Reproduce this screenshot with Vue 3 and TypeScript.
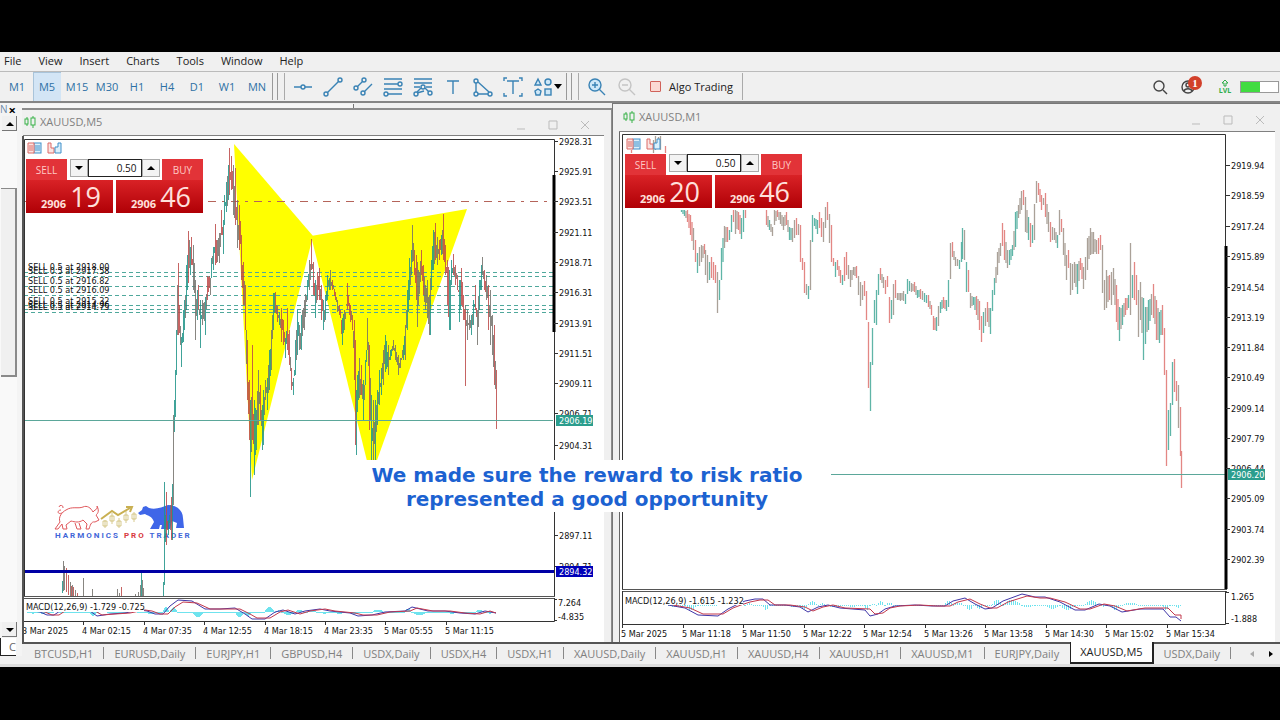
<script setup lang="ts">
import { ref } from 'vue'

type Key = [number, number, number]
interface Bar { x: number; y1: number; y2: number; tone: string }

const menus = ['File', 'View', 'Insert', 'Charts', 'Tools', 'Window', 'Help']
const frames = ['M1', 'M5', 'M15', 'M30', 'H1', 'H4', 'D1', 'W1', 'MN']
const frame = ref('M5')
const tabs = [
  'BTCUSD,H1', 'EURUSD,Daily', 'EURJPY,H1', 'GBPUSD,H4', 'USDX,Daily', 'USDX,H4', 'USDX,H1',
  'XAUUSD,Daily', 'XAUUSD,H1', 'XAUUSD,H4', 'XAUUSD,H1', 'XAUUSD,M1', 'EURJPY,Daily', 'XAUUSD,M5', 'USDX,Daily',
]
const activeTab = ref(13)
const lotsM5 = ref('0.50')
const lotsM1 = ref('0.50')

const noise = (n: number): number => {
  const v = Math.sin(n * 127.1 + 11.7) * 43758.5453
  return v - Math.floor(v)
}

/* Fills the gaps between key bars and picks a tone from the local direction. */
function makeBars(keys: Key[], step: number, maxGap: number, jitter: number): Bar[] {
  const out: Bar[] = []
  for (let i = 0; i < keys.length; i++) {
    const [x, a, b] = keys[i]
    const next = keys[i + 1]
    const dir = next ? next[1] + next[2] - a - b : 20
    const r = noise(x)
    const tone = Math.abs(dir) < 14 ? (r < 0.5 ? 'mix' : r < 0.75 ? 'up' : 'down') : dir < 0 ? (r < 0.8 ? 'up' : 'mix') : r < 0.8 ? 'down' : 'mix'
    out.push({ x, y1: a, y2: b, tone })
    if (!next || next[0] - x > maxGap) continue
    const n = Math.round((next[0] - x) / step)
    for (let k = 1; k < n; k++) {
      const t = k / n
      const top = a + (next[1] - a) * t
      const bottom = b + (next[2] - b) * t
      const size = bottom - top
      out.push({
        x: x + (next[0] - x) * t,
        y1: Math.round(top + size * jitter * noise(x + k)),
        y2: Math.round(bottom - size * jitter * noise(x * 3 + k)),
        tone: noise(x + k * 7) < 0.5 ? 'mix' : tone,
      })
    }
  }
  return out
}

const m5Keys: Key[] = [
  [163, 582, 596], [164, 482, 585], [166, 492, 545], [168, 520, 535], [170, 505, 530], [171, 497, 540], [172, 484, 540], [173, 415, 505], [174, 400, 432],
  [175, 370, 417], [176, 330, 375], [177, 285, 335], [178, 263, 335], [180, 326, 345], [181, 337, 367], [183, 310, 342], [184, 300, 330],
  [186, 265, 310], [187, 255, 290], [188, 231, 283], [190, 247, 275], [191, 237, 265], [193, 245, 290], [195, 280, 340], [197, 290, 320], [198, 285, 310],
  [200, 300, 348], [202, 300, 325], [205, 297, 335], [207, 276, 300], [209, 276, 288], [210, 278, 295], [211, 258, 278], [213, 247, 270], [215, 224, 265],
  [217, 240, 262], [219, 233, 263], [221, 210, 235], [223, 220, 254], [224, 195, 225], [226, 182, 212], [228, 165, 200], [229, 148, 195], [231, 156, 190],
  [233, 165, 215], [235, 168, 225], [237, 200, 248], [239, 205, 250], [241, 235, 280], [243, 262, 305], [245, 285, 330], [247, 340, 400],
  [249, 380, 440], [250, 400, 497], [252, 345, 440], [254, 400, 475], [256, 410, 450], [258, 370, 425], [260, 385, 420], [262, 405, 450],
  [263, 390, 445], [265, 380, 400], [267, 378, 410], [269, 350, 390], [271, 330, 370], [273, 293, 330], [275, 292, 313], [277, 306, 322],
  [279, 312, 325], [281, 308, 342], [283, 320, 345], [285, 338, 358], [287, 308, 350], [289, 330, 365], [291, 368, 390], [293, 378, 395],
  [295, 340, 375], [297, 310, 355], [299, 325, 350], [301, 315, 350], [304, 300, 330], [307, 280, 300], [309, 260, 290], [311, 239, 270],
  [313, 262, 295], [315, 280, 318], [317, 272, 300], [319, 268, 300], [321, 285, 320], [323, 300, 330], [325, 295, 320], [327, 275, 300],
  [330, 270, 290], [332, 280, 290], [335, 292, 300], [337, 300, 312], [339, 305, 315], [342, 318, 345], [344, 310, 330], [347, 283, 310],
  [350, 305, 322], [352, 315, 330], [354, 320, 380], [355, 340, 445], [356, 390, 455], [357, 375, 412], [359, 358, 398], [361, 365, 395],
  [363, 380, 420], [365, 360, 385], [367, 318, 350], [369, 345, 430], [371, 395, 460], [373, 400, 460], [375, 400, 460], [377, 390, 425],
  [379, 370, 405], [381, 368, 395], [383, 350, 385], [385, 335, 372], [388, 345, 375], [390, 350, 360], [393, 340, 350], [395, 345, 360],
  [398, 355, 375], [400, 358, 368], [403, 345, 360], [405, 325, 360], [407, 290, 330], [409, 258, 300], [411, 250, 275], [412, 225, 262],
  [414, 250, 275], [416, 255, 300], [418, 270, 305], [421, 250, 275], [423, 265, 295], [425, 285, 310], [427, 280, 318], [429, 295, 335],
  [431, 260, 290], [433, 230, 270], [435, 223, 260], [437, 237, 265], [439, 240, 260], [441, 235, 255], [443, 214, 260], [445, 245, 275],
  [447, 260, 305], [449, 270, 330], [451, 260, 285], [453, 254, 275], [455, 265, 285], [457, 275, 290], [459, 280, 322], [461, 268, 305],
  [463, 295, 320], [465, 305, 340], [467, 310, 340], [469, 315, 330], [471, 315, 335], [473, 300, 325], [475, 285, 310], [477, 310, 345],
  [479, 280, 310], [481, 265, 290], [482, 257, 275], [484, 270, 290], [486, 275, 300], [488, 285, 330], [490, 290, 345], [492, 315, 355],
  [494, 325, 385], [496, 370, 420],
]
const m5Extra: Bar[] = [
  { x: 62, y1: 581, y2: 593, tone: 'up' }, { x: 63, y1: 561, y2: 591, tone: 'mix' }, { x: 64, y1: 566, y2: 590, tone: 'mix' }, { x: 66, y1: 568, y2: 592, tone: 'down' },
  { x: 68, y1: 575, y2: 595, tone: 'down' }, { x: 70, y1: 582, y2: 596, tone: 'mix' }, { x: 71, y1: 586, y2: 596, tone: 'down' },
  { x: 72, y1: 585, y2: 596, tone: 'mix' }, { x: 73, y1: 587, y2: 596, tone: 'down' }, { x: 75, y1: 590, y2: 596, tone: 'mix' }, { x: 77, y1: 593, y2: 596, tone: 'down' },
  { x: 83, y1: 578, y2: 596, tone: 'mix' }, { x: 92, y1: 589, y2: 596, tone: 'mix' }, { x: 117, y1: 589, y2: 596, tone: 'mix' },
  { x: 119, y1: 593, y2: 596, tone: 'mix' }, { x: 121, y1: 587, y2: 596, tone: 'down' }, { x: 135, y1: 594, y2: 596, tone: 'mix' },
  { x: 138, y1: 592, y2: 596, tone: 'mix' }, { x: 140, y1: 585, y2: 596, tone: 'mix' }, { x: 141, y1: 572, y2: 596, tone: 'up' },
  { x: 142, y1: 580, y2: 596, tone: 'mix' }, { x: 143, y1: 588, y2: 596, tone: 'mix' }, { x: 465, y1: 310, y2: 386, tone: 'down' }, { x: 496, y1: 370, y2: 429, tone: 'down' },
  { x: 430, y1: 300, y2: 335, tone: 'up' }, { x: 417, y1: 262, y2: 327, tone: 'mix' }, { x: 450, y1: 280, y2: 330, tone: 'up' },
]
const m1Keys: Key[] = [
  [681, 210, 212], [684, 210, 216], [687, 210, 222], [690, 215, 235], [693, 228, 250], [695, 240, 262], [697, 253, 273], [699, 247, 266], [701, 245, 262], [704, 244, 254],
  [705, 250, 275], [707, 255, 283], [709, 262, 280], [711, 257, 278], [715, 265, 283], [717, 272, 313], [719, 280, 300], [721, 248, 280], [724, 226, 248],
  [727, 227, 242], [729, 230, 240], [731, 215, 232], [733, 210, 222], [735, 210, 234], [738, 212, 230], [741, 218, 239], [743, 210, 232], [745, 210, 218],
  [766, 210, 225], [769, 220, 230], [772, 227, 236], [774, 210, 225], [777, 210, 217], [780, 212, 224], [783, 217, 230], [786, 212, 225],
  [789, 227, 240], [792, 228, 242], [794, 220, 238], [796, 218, 235], [798, 224, 235], [800, 225, 262], [802, 258, 270], [804, 262, 293],
  [806, 284, 295], [808, 286, 299], [810, 240, 290], [812, 215, 242], [814, 218, 226], [817, 220, 234], [819, 212, 228], [821, 218, 237], [823, 222, 242],
  [825, 207, 228], [827, 202, 220], [829, 214, 243], [831, 225, 262], [833, 258, 266], [835, 262, 277], [837, 260, 270], [840, 270, 283], [842, 275, 285],
  [844, 257, 281], [846, 252, 275], [848, 265, 279], [850, 270, 287], [853, 267, 275], [856, 266, 278], [858, 276, 295], [860, 282, 306],
  [862, 285, 300], [864, 281, 296], [866, 291, 320], [868, 322, 388], [870, 362, 411], [872, 328, 365], [874, 300, 323], [876, 290, 325], [878, 274, 295],
  [880, 268, 280], [883, 277, 288], [885, 280, 294], [887, 276, 287], [889, 297, 323], [891, 300, 319], [893, 284, 315], [895, 280, 298], [897, 293, 300],
  [900, 293, 301], [903, 291, 301], [905, 294, 304], [907, 279, 294], [911, 283, 292], [914, 282, 292], [917, 290, 298], [920, 289, 299],
  [924, 293, 302], [928, 295, 307], [931, 305, 315], [933, 316, 330], [936, 317, 331], [938, 306, 326], [940, 302, 313], [943, 297, 308],
  [946, 300, 311], [948, 280, 307], [950, 243, 279], [952, 242, 257], [955, 257, 266], [959, 260, 269], [961, 242, 262], [962, 228, 259], [964, 230, 260], [966, 262, 292],
  [968, 270, 292], [970, 293, 308], [973, 297, 305], [976, 296, 315], [979, 301, 330], [981, 316, 342], [983, 312, 333], [987, 302, 322],
  [990, 308, 334], [992, 290, 311], [994, 278, 295], [997, 252, 275], [1000, 243, 256], [1002, 223, 246], [1004, 230, 260], [1007, 250, 268],
  [1009, 250, 265], [1012, 245, 256], [1015, 212, 247], [1018, 205, 218], [1021, 191, 210], [1023, 190, 205], [1025, 197, 232], [1028, 217, 240],
  [1030, 223, 247], [1032, 225, 243], [1034, 204, 240], [1036, 181, 203], [1038, 183, 195], [1041, 195, 210], [1043, 198, 205], [1045, 193, 217], [1048, 212, 232],
  [1050, 222, 242], [1054, 228, 240], [1057, 235, 248], [1059, 210, 235], [1061, 219, 232], [1063, 228, 255], [1066, 255, 280], [1068, 250, 268],
  [1070, 263, 295], [1072, 264, 290], [1074, 262, 283], [1077, 264, 294], [1080, 258, 270], [1083, 267, 289], [1085, 257, 280], [1087, 238, 270],
  [1090, 228, 255], [1093, 232, 254], [1096, 240, 254], [1098, 238, 254], [1100, 235, 250], [1102, 245, 293], [1104, 280, 310], [1106, 270, 308],
  [1109, 275, 300], [1111, 272, 305], [1113, 268, 295], [1116, 285, 322], [1119, 307, 341], [1122, 305, 325], [1125, 298, 315], [1128, 295, 308],
  [1130, 243, 315], [1132, 275, 298], [1134, 262, 300], [1136, 275, 305], [1138, 290, 337], [1140, 282, 320], [1143, 298, 360], [1145, 307, 344], [1148, 300, 330],
  [1151, 294, 315], [1153, 284, 318], [1156, 300, 340], [1159, 312, 343], [1162, 305, 335], [1164, 328, 375], [1166, 370, 466], [1168, 410, 450],
  [1170, 403, 436], [1172, 362, 405], [1174, 359, 392], [1176, 381, 401], [1178, 385, 428], [1180, 407, 456], [1181, 451, 488],
]
const m5Bars = [...makeBars(m5Keys, 1, 9, 0.5), ...m5Extra]
const m1Bars = makeBars(m1Keys, 2, 9, 0.15)

const m5Prices = [141, 171, 201, 232, 262, 292, 323, 353, 383, 413, 445, 475, 505, 535, 566]
  .map((y, i) => ({ y, v: (2928.31 - 2.4 * i).toFixed(2) }))
  .filter((p) => p.y < 460 || p.y > 511)
const m1Prices = [165, 195, 226, 256, 287, 317, 347, 377, 408, 438, 468, 498, 529, 559].map((y, i) => ({ y, v: (2919.94 - 1.35 * i).toFixed(2) }))
const m5Dates = ['3 Mar 2025', '4 Mar 02:15', '4 Mar 07:35', '4 Mar 12:55', '4 Mar 18:15', '4 Mar 23:35', '5 Mar 05:55', '5 Mar 11:15'].map((v, i) => ({ v, x: Math.round(23 + 60.4 * i) }))
const m1Dates = ['5 Mar 2025', '5 Mar 11:18', '5 Mar 11:50', '5 Mar 12:22', '5 Mar 12:54', '5 Mar 13:26', '5 Mar 13:58', '5 Mar 14:30', '5 Mar 15:02', '5 Mar 15:34'].map((v, i) => ({ v, x: Math.round(622 + 60.5 * i) }))
const orders = [
  { y: 272, t: 270, v: '2918.00' }, { y: 276, t: 274, v: '2917.58' }, { y: 286, t: 284, v: '2916.82' }, { y: 295, t: 293, v: '2916.09' },
  { y: 305, t: 304, v: '2915.32' }, { y: 309, t: 308, v: '2914.96' }, { y: 312, t: 310, v: '2914.75' },
]

const macdM5: [number, number][] = [
  [27, 610], [40, 612], [47, 615], [54, 615], [60, 611], [90, 611], [97, 616], [110, 614], [125, 613], [140, 610], [147, 611], [155, 614], [163, 614], [170, 606], [178, 600], [192, 601],
  [205, 609], [220, 609], [235, 608], [245, 614], [252, 619], [265, 619], [275, 612], [283, 610], [295, 614], [305, 611], [320, 609], [330, 611], [350, 613],
  [358, 616], [372, 615], [385, 612], [405, 611], [412, 607], [428, 611], [445, 611], [460, 613], [475, 614], [485, 611], [496, 613],
]
const macdM1: [number, number][] = [
  [668, 605], [685, 608], [698, 615], [718, 616], [728, 609], [736, 605], [745, 601], [755, 599], [763, 599], [770, 605], [785, 605], [800, 607], [808, 612],
  [818, 607], [828, 605], [840, 608], [865, 610], [870, 616], [878, 614], [885, 609], [895, 606], [915, 605], [932, 606], [945, 606], [953, 601], [965, 598],
  [975, 604], [985, 609], [992, 608], [1003, 601], [1022, 594], [1035, 597], [1045, 597], [1060, 602], [1075, 610], [1085, 610], [1099, 604], [1110, 606],
  [1122, 612], [1140, 609], [1163, 609], [1170, 617], [1176, 617], [1181, 621],
]
const line = (p: [number, number][]): string => p.map((q) => q.join(',')).join(' ')
const signal = (p: [number, number][], base: number): [number, number][] =>
  p.map((q, i) => [i === p.length - 1 ? q[0] : q[0] + 5, Math.round(q[1] * 0.85 + base * 0.15)])

/* Histogram bars grow from the zero level with the slope of the main curve. */
function histogram(p: [number, number][], base: number, step: number): Bar[] {
  const out: Bar[] = []
  for (let i = 1; i < p.length; i++) {
    const slope = Math.max(-5, Math.min(5, (p[i][1] - p[i - 1][1]) * 0.8))
    const width = p[i][0] - p[i - 1][0]
    for (let x = p[i - 1][0]; x < p[i][0]; x += step) {
      const h = slope * Math.sin(((x - p[i - 1][0] + 1) / width) * Math.PI)
      out.push({ x, y1: base, y2: Math.round(base + (Math.abs(h) < 1 ? 1 : h)), tone: 'hist' })
    }
  }
  return out
}
const sigM5 = signal(macdM5, 612)
const sigM1 = signal(macdM1, 605)
const histM5 = histogram(macdM5, 612, 1)
const histM1 = histogram(macdM1, 605, 2)
</script>

<template>
  <div class="app">
    <nav class="menubar">
      <a v-for="m in menus" :key="m" href="#">{{ m }}</a>
    </nav>

    <div class="toolbar">
      <div class="frames">
        <button v-for="f in frames" :key="f" :class="{ on: frame === f }" @click="frame = f">{{ f }}</button>
      </div>
      <div class="grip"></div>
      <div class="tools">
        <button aria-label="Horizontal line"><svg viewBox="0 0 22 22"><path d="M2 11H9M13 11H20" /><circle cx="11" cy="11" r="2" /></svg></button>
        <button aria-label="Trend line"><svg viewBox="0 0 22 22"><path d="M5 17 17 5" /><circle cx="4" cy="18" r="2" /><circle cx="18" cy="4" r="2" /></svg></button>
        <button aria-label="Channel"><svg viewBox="0 0 22 22"><path d="M5 11 11 5M12 16 20 8" /><circle cx="4" cy="12" r="2" /><circle cx="12" cy="4" r="2" /><circle cx="11" cy="17" r="2" /></svg></button>
        <button aria-label="Fibonacci retracement"><svg viewBox="0 0 22 22"><path d="M2 3H20M2 8H16M2 13H20M6 18H20" /><circle cx="18" cy="8" r="2" /><circle cx="4" cy="18" r="2" /></svg></button>
        <button aria-label="Fibonacci fan"><svg viewBox="0 0 22 22"><path d="M2 3H20M2 7H20M2 11H8M14 11H20M5 16 9 12M13 12 17 16M5 17 12 15" /><circle cx="11" cy="11" r="2" /><circle cx="4" cy="18" r="2" /><circle cx="18" cy="17" r="2" /></svg></button>
        <button aria-label="Text"><svg viewBox="0 0 22 22"><path d="M5 5H17M11 5V18" /></svg></button>
        <button aria-label="Triangle"><svg viewBox="0 0 22 22"><path d="M4 7V16M6 18H16M6 6 17 16" /><circle cx="4" cy="5" r="2" /><circle cx="4" cy="18" r="2" /><circle cx="18" cy="18" r="2" /></svg></button>
        <button aria-label="Text label"><svg viewBox="0 0 22 22"><path d="M5 5H17M11 5V18M2 5V2H5M17 2H20V5M2 17V20H5M17 20H20V17" /></svg></button>
        <button class="wide" aria-label="Shapes">
          <svg viewBox="0 0 22 22"><path class="soft" d="M6 3 9 9H3Z" /><circle class="soft" cx="16" cy="6" r="3" /><path class="soft" d="M6 13 9 15 8 19H4L3 15Z" /><rect class="soft" x="13" y="13" width="6" height="6" /></svg>
          <i class="caret"></i>
        </button>
      </div>
      <div class="grip"></div>
      <div class="tools zooms">
        <button aria-label="Zoom in"><svg viewBox="0 0 22 22"><circle class="lens" cx="10" cy="9" r="6" /><path d="M14 13 20 19M7 9H13M10 6V12" /></svg></button>
        <button class="off" aria-label="Zoom out"><svg viewBox="0 0 22 22"><circle cx="10" cy="9" r="6" /><path d="M14 13 20 19M7 9H13" /></svg></button>
        <button class="algo"><i></i>Algo Trading</button>
      </div>
      <div class="status">
        <button aria-label="Search"><svg class="dark" viewBox="0 0 22 22"><circle cx="10" cy="10" r="5" /><path d="M14 14 18 18" /></svg></button>
        <button class="account" aria-label="Account">
          <svg class="dark" viewBox="0 0 22 22"><circle cx="10" cy="11" r="6" /><circle cx="10" cy="9" r="2" /><path d="M6 15C7 12 13 12 14 15" /></svg>
          <span class="badge">1</span>
        </button>
        <div class="lvl"><svg viewBox="0 0 10 8"><path d="M5 1 8 4H6V7H4V4H2Z" /></svg><span>LVL</span></div>
        <div class="meter"><i></i></div>
      </div>
    </div>

    <main class="workspace">
      <aside class="navigator">
        <header><span>N</span><button aria-label="Close">×</button></header>
        <button class="arrow" aria-label="Scroll up"><i class="tri up"></i></button>
        <div class="track"><div class="thumb"></div></div>
        <button class="arrow" aria-label="Scroll down"><i class="tri down"></i></button>
        <div class="corner">C</div>
      </aside>

      <section class="win left">
        <header class="title">
          <svg class="candles" viewBox="0 0 12 12"><path d="M3 1V3M3 8V10M9 0V2M9 9V12" /><rect x="1" y="3" width="3" height="5" /><rect x="7" y="2" width="4" height="7" /></svg>
          <span>XAUUSD,M5</span>
          <div class="ctl">
            <button aria-label="Minimize"><svg viewBox="0 0 10 10"><path d="M1 9H9" /></svg></button>
            <button aria-label="Maximize"><svg viewBox="0 0 10 10"><path d="M1 1H9V9H1Z" /></svg></button>
            <button aria-label="Close"><svg viewBox="0 0 10 10"><path d="M1 1 9 9M9 1 1 9" /></svg></button>
          </div>
        </header>
        <div class="chart">
          <svg class="plot" viewBox="24 136 580 506" preserveAspectRatio="xMinYMin meet">
            <polygon class="zone" points="234,144 313,236 252,480" />
            <polygon class="zone" points="311,236 467,209 371,477" />
            <g class="orders">
              <path v-for="o in orders" :key="o.y" :d="`M24 ${o.y}.5H553`" />
              <text v-for="o in orders" :key="o.v" x="28" :y="o.t">SELL 0.5 at {{ o.v }}</text>
            </g>
            <path class="stop" d="M24 201.5H553" />
            <g class="logo">
              <path class="bull" d="M66 510C72 506 78 509 83 507C87 505 91 508 93 512L95 510C98 509 97 506 97 506C100 512 97 514 96 515L99 520L95 522C91 521 90 526 89 529H86L87 524L83 520C79 523 75 522 71 521L66 525L67 529H63L62 524L58 529H55L60 522C58 517 62 512 66 510ZM62 513C57 515 57 510 61 510M63 508A2 2 0 1 0 59 507M75 523L77 529H81L79 523" />
              <path class="gold" d="M101 519 112 511 118 515 130 508M126 507 132 507 130 512" />
              <path class="coins" d="M105 520V528M103 521H107V526H103ZM112 513V524M110 516H114V521H110ZM119 518V528M117 521H121V526H117ZM126 511V523M124 515H128V520H124ZM134 512V522M132 514H136V519H132Z" />
              <path class="bear" d="M138 513 142 510 143 507 146 506 149 508C156 510 162 507 168 505C176 505 183 510 183 518L184 528H176L177 523 172 521 170 529H161L162 525H160L159 529H150L154 522C152 516 148 516 145 514L140 515Z" />
              <text class="brand" x="55" y="538">HARMONICS <tspan class="pro">PRO</tspan> TRADER</text>
            </g>
            <g class="bars">
              <path v-for="(b, i) in m5Bars" :key="i" :class="b.tone" :d="`M${b.x + 0.5} ${b.y1}V${b.y2}`" />
            </g>
            <path class="price" d="M24 420.5H553" />
            <path class="level" d="M24 571.5H554" />
            <path class="box" d="M24.5 597V139.5H554.5V597" />
            <path class="range" d="M554 175V332" />
            <path class="rule" d="M24 596.5H555M24 598.5H555" />
            <g class="hist"><path v-for="(b, i) in histM5" :key="i" :d="`M${b.x + 0.5} ${b.y1}V${b.y2}`" /></g>
            <polyline class="main" :points="line(macdM5)" />
            <polyline class="sig" :points="line(sigM5)" />
            <rect class="plate" x="25" y="600" width="119" height="12" />
            <text x="26" y="610">MACD(12,26,9) -1.729 -0.725</text>
            <path class="box" d="M554.5 598V621.5H24M554 599.5H557M554 620.5H557" />
            <g v-for="d in m5Dates" :key="d.v"><path class="box" :d="`M${d.x}.5 621V625`" /><text :x="d.x - 1" y="634">{{ d.v }}</text></g>
            <g v-for="p in m5Prices" :key="p.v"><path class="box" :d="`M554 ${p.y}.5H558`" /><text x="559" :y="p.y + 4">{{ p.v }}</text></g>
            <text x="558" y="606">7.264</text><text x="558" y="620">-4.835</text>
            <rect class="tag" x="556" y="415" width="37" height="11" /><text class="inv" x="559" y="424">2906.19</text>
            <rect class="tag blue" x="556" y="566" width="37" height="11" /><text class="inv" x="559" y="575">2894.32</text>
          </svg>
          <div class="quick">
            <div class="minis">
              <svg viewBox="0 0 15 12"><rect class="b" x="7" y="1" width="7" height="10" /><path class="r" d="M7 1H1V11H7ZM2 4H6M2 6H6M2 8H6" /><path class="b" d="M8 4H13M8 6H13M8 8H13" /></svg>
              <svg viewBox="0 0 15 12"><path class="r" d="M4 1H1V11H7V6H4Z" /><path class="b" d="M14 1H11V5H8V11H14Z" /></svg>
            </div>
            <div class="row">
              <button class="side">SELL</button>
              <div class="lots">
                <button aria-label="Less"><i class="tri down"></i></button>
                <label><input v-model="lotsM5" aria-label="Volume" /></label>
                <button aria-label="More"><i class="tri up"></i></button>
              </div>
              <button class="side">BUY</button>
            </div>
            <div class="row deals"><button><b>2906</b><span>19</span></button><button><b>2906</b><span>46</span></button></div>
          </div>
        </div>
      </section>

      <section class="win right">
        <header class="title">
          <svg class="candles" viewBox="0 0 12 12"><path d="M3 1V3M3 8V10M9 0V2M9 9V12" /><rect x="1" y="3" width="3" height="5" /><rect x="7" y="2" width="4" height="7" /></svg>
          <span>XAUUSD,M1</span>
          <div class="ctl">
            <button aria-label="Minimize"><svg viewBox="0 0 10 10"><path d="M1 9H9" /></svg></button>
            <button aria-label="Maximize"><svg viewBox="0 0 10 10"><path d="M1 1H9V9H1Z" /></svg></button>
            <button aria-label="Close"><svg viewBox="0 0 10 10"><path d="M1 1 9 9M9 1 1 9" /></svg></button>
          </div>
        </header>
        <div class="chart">
          <svg class="plot" viewBox="620 132 655 510" preserveAspectRatio="xMinYMin meet">
            <g class="bars pale">
              <path v-for="(b, i) in m1Bars" :key="i" :class="b.tone" :d="`M${b.x + 0.5} ${b.y1}V${b.y2}`" />
              <path class="mix" d="M653.5 140V153M655.5 136V150M658.5 137V146M660.5 136V150" /><path class="down" d="M665.5 146V153M631.5 150V153" />
            </g>
            <path class="price" d="M622 474.5H1225" />
            <path class="box" d="M622.5 590V134.5H1225.5V590" />
            <path class="range" d="M1226 246V589" />
            <path class="rule" d="M622 589.5H1227M622 591.5H1227" />
            <g class="hist"><path v-for="(b, i) in histM1" :key="i" :d="`M${b.x + 0.5} ${b.y1}V${b.y2}`" /></g>
            <polyline class="main" :points="line(macdM1)" />
            <polyline class="sig" :points="line(sigM1)" />
            <rect class="plate" x="624" y="594" width="119" height="11" />
            <text x="625" y="604">MACD(12,26,9) -1.615 -1.232</text>
            <path class="box" d="M622.5 591V624.5H1225.5V591M1225 592.5H1229M1225 623.5H1229" />
            <g v-for="d in m1Dates" :key="d.v"><path class="box" :d="`M${d.x}.5 624V628`" /><text :x="d.x - 1" y="637">{{ d.v }}</text></g>
            <g v-for="p in m1Prices" :key="p.v"><path class="box" :d="`M1226 ${p.y}.5H1230`" /><text x="1231" :y="p.y + 4">{{ p.v }}</text></g>
            <text x="1231" y="600">1.265</text><text x="1231" y="622">-1.888</text>
            <rect class="tag" x="1228" y="469" width="37" height="11" /><text class="inv" x="1231" y="478">2906.20</text>
          </svg>
          <div class="quick">
            <div class="minis">
              <svg viewBox="0 0 15 12"><rect class="b" x="7" y="1" width="7" height="10" /><path class="r" d="M7 1H1V11H7ZM2 4H6M2 6H6M2 8H6" /><path class="b" d="M8 4H13M8 6H13M8 8H13" /></svg>
              <svg viewBox="0 0 15 12"><path class="r" d="M4 1H1V11H7V6H4Z" /><path class="b" d="M14 1H11V5H8V11H14Z" /></svg>
            </div>
            <div class="row">
              <button class="side">SELL</button>
              <div class="lots">
                <button aria-label="Less"><i class="tri down"></i></button>
                <label><input v-model="lotsM1" aria-label="Volume" /></label>
                <button aria-label="More"><i class="tri up"></i></button>
              </div>
              <button class="side">BUY</button>
            </div>
            <div class="row deals"><button><b>2906</b><span>20</span></button><button><b>2906</b><span>46</span></button></div>
          </div>
        </div>
      </section>

      <p class="caption">We made sure the reward to risk ratio<br />represented a good opportunity</p>
    </main>

    <footer class="tabs">
      <button v-for="(t, i) in tabs" :key="i" :class="{ on: activeTab === i, before: activeTab === i + 1 }" @click="activeTab = i">{{ t }}</button>
      <div class="pager"><button aria-label="Previous tabs" disabled><i class="tri back"></i></button><button aria-label="Next tabs"><i class="tri next"></i></button></div>
    </footer>
  </div>
</template>

<style>
body { background: #000; }
</style>

<style scoped>
.app {
  box-sizing: border-box;
  display: flex;
  flex-direction: column;
  height: 100vh;
  padding: 52px 0 53px;
  background: #000;
  color: #222;
  font: 11px/16px "Open Sans", "Noto Sans", sans-serif;
  overflow: hidden;
}
button { padding: 0; border: 0; background: none; color: inherit; font: inherit; }
svg { display: block; fill: none; }

.menubar { display: flex; gap: 17px; height: 19px; padding-left: 4px; border-bottom: 1px solid #bbb; background: #f0f0f0; line-height: 18px; }
.menubar a { color: #222; text-decoration: none; }

.toolbar { display: flex; align-items: center; height: 29px; background: #f0f0f0; }
.frames, .tools, .status { display: flex; align-items: center; gap: 2px; }
.frames { padding-left: 3px; }
.frames button { width: 28px; height: 29px; color: #2d71a5; white-space: nowrap; }
.frames .on { background: #d3e5f5; box-shadow: inset 1px 1px #a9c4da; }
.grip { width: 4px; height: 27px; margin: 0 5px 0 1px; border: solid #999; border-width: 0 1px; box-shadow: 6px 0 #f0f0f0, 7px 0 #aaa; }
.tools { padding-left: 6px; }
.tools button { display: flex; align-items: center; justify-content: center; width: 28px; height: 28px; }
.tools svg { flex: none; width: 22px; height: 22px; stroke: #3a83b5; stroke-width: 1.4; }
.tools .soft, .tools .lens { fill: #cfe8f8; }
.tools .wide { width: 36px; }
.caret { border: solid transparent; border-width: 5px 4px 0; border-top-color: #000; }
.zooms { padding-left: 5px; }
.tools .off svg { stroke: #c4c4c4; }
.tools .algo { width: auto; height: 27px; gap: 8px; padding: 0 9px 0 8px; border-right: 1px solid #aaa; }
.algo i { width: 9px; height: 9px; border: 1px solid #d0625a; border-radius: 1px; background: #fbd9d3; }
.status { margin-left: auto; gap: 7px; padding-right: 1px; }
.status .dark { width: 22px; height: 22px; stroke: #444; stroke-width: 1.4; }
.account { position: relative; }
.badge { position: absolute; top: 0; right: -2px; width: 14px; height: 14px; border-radius: 50%; background: #d2402a; color: #fff; font: bold 11px/14px "Liberation Serif", serif; }
.lvl { display: flex; flex-direction: column; align-items: center; width: 22px; margin-left: 7px; color: #2fae4a; font: bold 7px/7px "Open Sans", sans-serif; }
.lvl svg { width: 10px; height: 8px; stroke: #2fae4a; }
.meter { width: 37px; height: 10px; margin-left: -3px; border: 1px solid #999; background: #fff; }
.meter i { display: block; width: 52%; height: 100%; background: #41dc41; }

.workspace {
  position: relative;
  flex: 1;
  display: grid;
  grid-template-columns: 22px minmax(0, 590fr) minmax(0, 668fr);
  min-height: 0;
  border-top: 2px solid #858585;
  background: #f0f0f0;
}
.navigator { position: relative; z-index: 1; display: flex; flex-direction: column; margin-bottom: -14px; background: #f4f4f4; }
.navigator header { display: flex; justify-content: space-between; height: 13px; padding-right: 6px; color: #6d8ba8; font-size: 10px; line-height: 12px; }
.navigator header button { color: #000; font-weight: bold; font-size: 13px; }
.arrow { display: flex; align-items: center; justify-content: center; width: 15px; height: 15px; margin-left: 2px; background: #f0f0f0; box-shadow: inset -1px -1px #777; }
.tri { display: block; border: solid transparent; }
.tri.up { border-width: 0 4px 4px; border-bottom-color: #000; }
.tri.down { border-width: 4px 4px 0; border-top-color: #000; }
.tri.back { border-width: 3px 4px 3px 0; border-right-color: #aaa; }
.tri.next { border-width: 3px 0 3px 4px; border-left-color: #000; }
.track { display: flex; flex: 1; flex-direction: column; margin-right: 5px; padding-top: 57px; background: #f9f9f9; }
.thumb { height: 186px; margin-left: 1px; border: solid #8a8a8a; border-width: 1px 2px 2px 0; background: #f0f0f0; }
.corner { width: 15px; height: 17px; margin-top: 1px; border: solid #222; border-width: 0 0 1px 1px; background: #fff; color: #666; line-height: 17px; text-align: right; }

.win { box-sizing: border-box; display: flex; flex-direction: column; background: #f0f0f0; }
.win.left { position: relative; margin-top: 5px; border: solid #8c8c8c; border-width: 2px 1px 0 0; padding-right: 7px; }
.win.left::before { content: ""; position: absolute; top: -6px; left: 0; width: 331px; height: 4px; border-right: 1px solid #777; background: #f6f6f6; }
.win.left .title { margin-left: 1px; padding: 0 14px 2px 1px; }
.win.right { border: solid #777; border-width: 1px 0 0 1px; padding: 0 5px 0 6px; }
.win.right .title { height: 28px; padding: 0 10px 2px 4px; }
.title { box-sizing: border-box; display: flex; align-items: center; gap: 4px; height: 26px; border-bottom: 1px solid #808080; color: #808080; }
.candles { width: 12px; height: 12px; stroke: #38b248; }
.ctl { display: flex; gap: 22px; margin-left: auto; padding-top: 6px; }
.ctl button, .ctl svg { width: 10px; height: 10px; }
.ctl svg { stroke: #bbb; }
.chart { position: relative; flex: 1; min-height: 0; border-left: 2px solid #555; background: #fff; }
.right .chart { border-left: 1px solid #666; }
.plot { width: 100%; height: 100%; font: 9px "DejaVu Sans Condensed", "DejaVu Sans", sans-serif; }
.plot text { fill: #111; }
.plot .inv { fill: #fff; }
.zone { fill: #ff0; }
.orders path { stroke: #4fa89c; stroke-dasharray: 4 3; }
.stop { stroke: #b5645a; stroke-dasharray: 8 6 3 6; }
.bars { opacity: 0.85; }
.bars .up { stroke: #1f9488; }
.bars .down { stroke: #bd4a48; }
.bars .mix { stroke: #74726c; }
.bars.pale { opacity: 1; stroke-width: 1.3; }
.pale .up { stroke: #5fb5a7; }
.pale .down { stroke: #e38784; }
.pale .mix { stroke: #aaa198; }
.price { stroke: #5ba79a; }
.level { stroke: #0000a5; stroke-width: 3; }
.box { stroke: #333; }
.range { stroke: #000; stroke-width: 3; }
.rule { stroke: #555; }
.hist path { stroke: #6fe3ee; }
.main { stroke: #4036a8; }
.sig { stroke: #c2384c; }
.plate { fill: #fff; }
.tag { fill: #2b9d8d; }
.tag.blue { fill: #0000b8; }
.bull { stroke: #e0585c; }
.gold { stroke: #c9b052; stroke-width: 2; }
.coins { stroke: #cdbd72; stroke-width: 0.8; }
.bear { fill: #3f66e8; }
.plot .brand { fill: #3f66d8; font: bold 8px Roboto, sans-serif; letter-spacing: 2px; }
.plot .pro { fill: #d8393e; }

.quick { position: absolute; top: 6px; left: 2px; width: 177px; }
.right .quick { left: 5px; }
.minis { display: flex; gap: 5px; height: 17px; padding-left: 1px; }
.right .minis { height: 16px; }
.minis svg { width: 15px; height: 12px; }
.minis .r { stroke: #dc6a66; fill: #fbe4e2; }
.minis .b { stroke: #3f8fc9; fill: #dcf0fb; }
.row { display: flex; justify-content: space-between; }
.side { width: 41px; height: 21px; background: #e23338; color: #ffc9c5; font-size: 10px; }
.lots { display: flex; width: 90px; height: 18px; }
.lots button { display: flex; align-items: center; justify-content: center; width: 18px; border: 1px solid #aaa; background: #f3f3f3; }
.lots label { flex: 1; }
.lots input { box-sizing: border-box; width: 100%; height: 18px; padding: 0 4px; border: 1px solid #222; border-radius: 0; background: #fff; color: #111; font: inherit; font-size: 10px; text-align: right; }
.deals button { display: flex; align-items: flex-end; justify-content: center; gap: 4px; width: 87px; height: 33px; padding-left: 3px; background: linear-gradient(#d92226, #b00006); color: #ffe0dc; }
.deals b { font-size: 11px; line-height: 19px; }
.deals span { font-size: 27px; line-height: 33px; }

.caption {
  position: absolute;
  top: 357px;
  left: 26.8%;
  width: 488px;
  margin: 0;
  padding: 3px 0 0;
  height: 49px;
  background: #fff;
  color: #1c62d1;
  font: bold 20px/24px "DejaVu Sans", sans-serif;
  text-align: center;
}

.tabs { display: flex; height: 20px; padding-left: 24px; border-top: 2px solid #555; border-bottom: 3px solid #ddd; background: #f0f0f0; color: #808080; }
.tabs > button { position: relative; padding: 0 10px; border-right: 1px solid #f0f0f0; line-height: 18px; white-space: nowrap; }
.tabs > button:not(.on):not(.before)::after { content: ""; position: absolute; top: 3px; right: -1px; height: 12px; border-right: 1px solid #888; }
.tabs > .on { margin-top: -2px; padding: 0 9px; border: solid #222; border-width: 0 2px 2px 1px; background: #fff; color: #222; }
.pager { display: flex; align-items: center; gap: 15px; margin-left: auto; padding-right: 7px; }
</style>
